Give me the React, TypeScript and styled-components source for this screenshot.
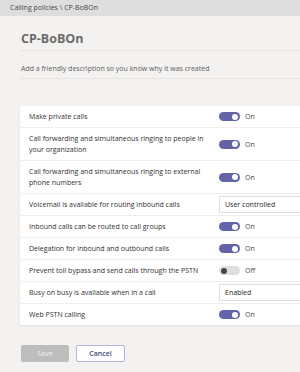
import styled, { createGlobalStyle } from 'styled-components';

const GlobalStyle = createGlobalStyle`
  html, body {
    margin: 0;
    padding: 0;
    background: #f3f2f1;
    font-family: "Open Sans", "Noto Sans", sans-serif;
    color: #252423;
  }
`;

type Setting = {
  label: string;
  kind: 'toggle' | 'select';
  on?: boolean;
  value?: string;
};

const settings: Setting[] = [
  { label: 'Make private calls', kind: 'toggle', on: true },
  { label: 'Call forwarding and simultaneous ringing to people in your organization', kind: 'toggle', on: true },
  { label: 'Call forwarding and simultaneous ringing to external phone numbers', kind: 'toggle', on: true },
  { label: 'Voicemail is available for routing inbound calls', kind: 'select', value: 'User controlled' },
  { label: 'Inbound calls can be routed to call groups', kind: 'toggle', on: true },
  { label: 'Delegation for inbound and outbound calls', kind: 'toggle', on: true },
  { label: 'Prevent toll bypass and send calls through the PSTN', kind: 'toggle', on: false },
  { label: 'Busy on busy is available when in a call', kind: 'select', value: 'Enabled' },
  { label: 'Web PSTN calling', kind: 'toggle', on: true },
];

export default function App() {
  return (
    <>
      <GlobalStyle />
      <Page>
        <TopBar>Calling policies \ CP-BoBOn</TopBar>
        <Content>
          <Title>CP-BoBOn</Title>
          <Description>Add a friendly description so you know why it was created</Description>
          <Card>
            {settings.map((s) => (
              <Row key={s.label}>
                <Label>{s.label}</Label>
                <Control>
                  {s.kind === 'toggle' ? (
                    <>
                      <Switch $on={!!s.on} />
                      <SwitchText>{s.on ? 'On' : 'Off'}</SwitchText>
                    </>
                  ) : (
                    <Select>{s.value}</Select>
                  )}
                </Control>
              </Row>
            ))}
          </Card>
          <Buttons>
            <SaveButton disabled>Save</SaveButton>
            <CancelButton>Cancel</CancelButton>
          </Buttons>
        </Content>
      </Page>
    </>
  );
}

const Page = styled.div`
  width: 300px;
  height: 372px;
  overflow: hidden;
  background: #f3f2f1;
`;

const TopBar = styled.div`
  height: 16px;
  background: #dedede;
  font-size: 7px;
  line-height: 16px;
  padding-left: 10px;
  color: #484644;
`;

const Content = styled.div`
  padding-left: 20px;
`;

const Title = styled.h1`
  margin: 0;
  padding: 13px 0 0 1px;
  height: 21px;
  font-size: 12.5px;
  line-height: 20px;
  font-weight: 700;
  color: #6b6a69;
  border-bottom: 1px solid #e6e4e2;
`;

const Description = styled.div`
  font-size: 7px;
  line-height: 10px;
  padding: 13px 0 4px 1px;
  color: #605e5c;
  border-bottom: 1px solid #e6e4e2;
`;

const Card = styled.div`
  margin-top: 27px;
  background: #ffffff;
  box-shadow: 0 1px 2px rgba(0, 0, 0, 0.08);
`;

const Row = styled.div`
  display: flex;
  align-items: center;
  min-height: 21px;
  padding: 0 0 0 9px;
  border-bottom: 1px solid #f0efee;
  &:last-child {
    border-bottom: none;
  }
`;

const Label = styled.div`
  width: 180px;
  font-size: 7px;
  line-height: 11px;
  padding: 5px 0;
  color: #323130;
`;

const Control = styled.div`
  display: flex;
  align-items: center;
  margin-left: 10px;
  gap: 5px;
  flex: 1;
`;

const Switch = styled.span<{ $on: boolean }>`
  position: relative;
  width: 21px;
  height: 9px;
  border-radius: 5px;
  background: ${(p) => (p.$on ? '#6264a7' : '#e1dfdd')};
  &::after {
    content: '';
    position: absolute;
    top: 1.5px;
    left: ${(p) => (p.$on ? '13px' : '2px')};
    width: 6px;
    height: 6px;
    border-radius: 50%;
    background: ${(p) => (p.$on ? '#ffffff' : '#484644')};
  }
`;

const SwitchText = styled.span`
  font-size: 7px;
  color: #484644;
`;

const Select = styled.div`
  flex: 1;
  height: 15px;
  line-height: 15px;
  font-size: 7px;
  padding-left: 5px;
  border: 1px solid #e1dfdd;
  border-right: none;
  background: #ffffff;
  color: #252423;
`;

const Buttons = styled.div`
  display: flex;
  gap: 7px;
  margin-top: 20px;
  padding-left: 1px;
`;

const SaveButton = styled.button`
  width: 48px;
  height: 17px;
  border: none;
  border-radius: 2px;
  background: #bdbdbd;
  color: #e6e6e6;
  font-family: inherit;
  font-size: 7px;
  font-weight: 600;
  padding: 0;
`;

const CancelButton = styled.button`
  width: 49px;
  height: 17px;
  border: 1px solid #b3b3dc;
  border-radius: 2px;
  background: #ffffff;
  color: #464775;
  font-family: inherit;
  font-size: 7px;
  font-weight: 600;
  padding: 0;
`;
